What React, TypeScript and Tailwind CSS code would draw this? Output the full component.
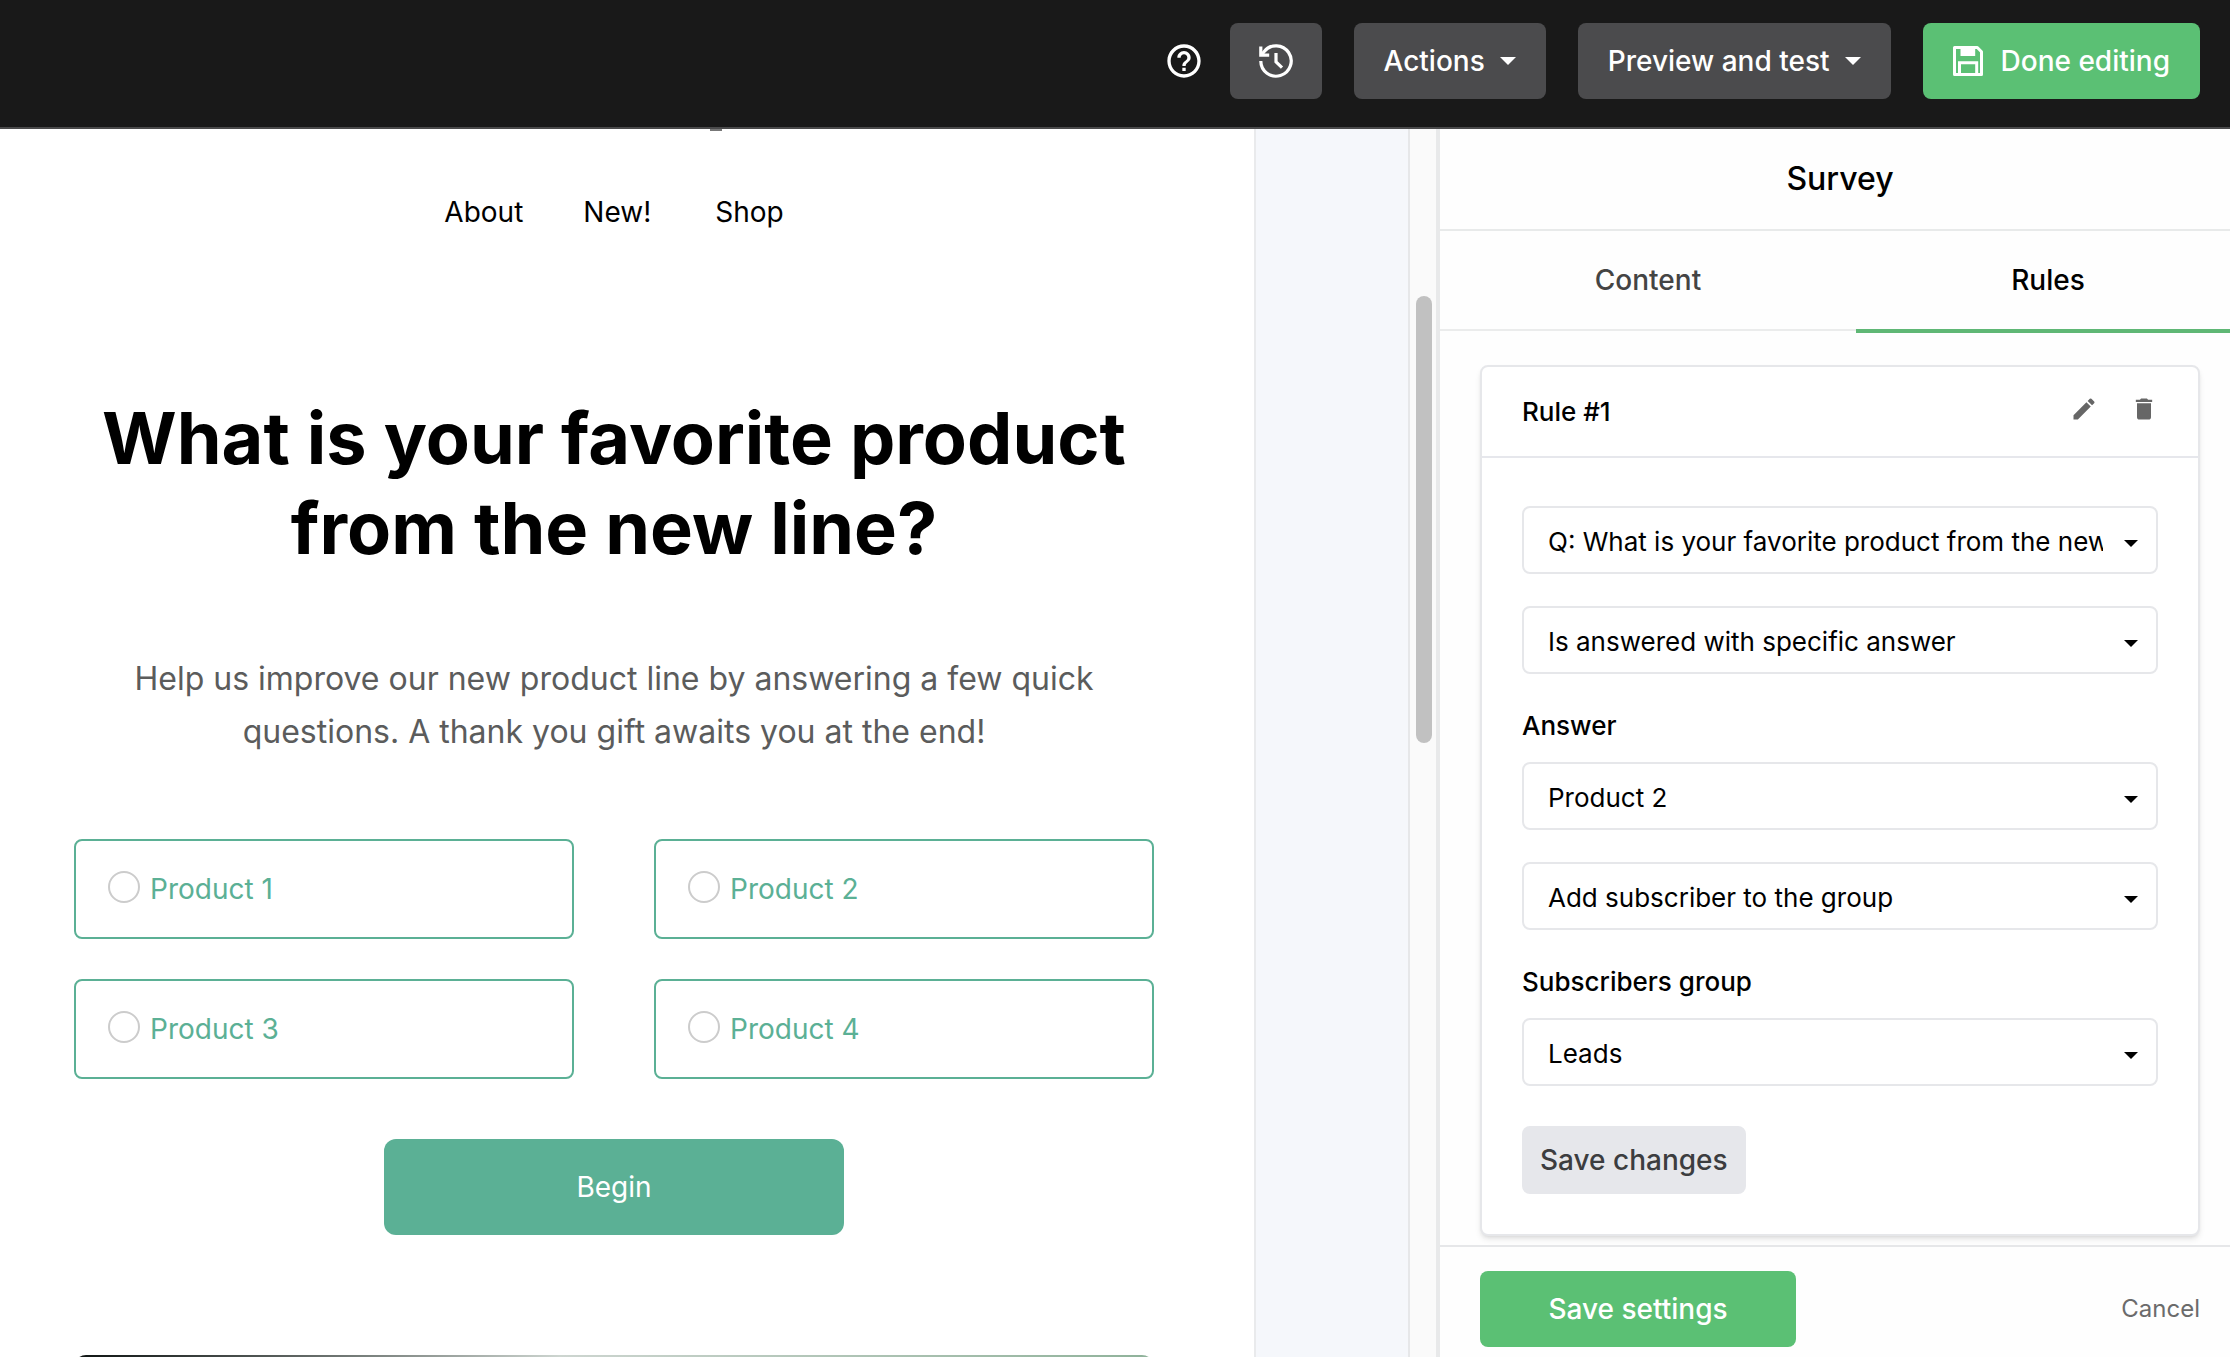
import { useState } from "react";
import { MdDelete, MdEdit, MdHelpOutline } from "react-icons/md";

const products = ["Product 1", "Product 2", "Product 3", "Product 4"];

const Caret = ({ className }: { className?: string }) => (
  <svg className={className} viewBox="0 0 16 8" fill="currentColor" aria-hidden="true">
    <path d="M0 0h16L8 8z" />
  </svg>
);

const HistoryIcon = () => (
  <svg className="w-[34px] h-[34px]" viewBox="0 0 34 34" fill="none" stroke="currentColor" strokeWidth="3.2" aria-hidden="true">
    <path d="M1.8 17a15.2 15.2 0 1 0 3.4-9.6L2.4 11" />
    <path d="M1.8 2.5v8.7h8.4" />
    <path d="M17 9v8.8l6 5.8" />
  </svg>
);

const SaveIcon = () => (
  <svg className="w-[30px] h-[30px]" viewBox="0 0 30 30" fill="none" stroke="currentColor" strokeWidth="3" aria-hidden="true">
    <path d="M1.5 1.5h22.8l4.2 4.3v22.7h-27z" strokeLinejoin="round" />
    <path d="M6.5 28V16.7h17.2V28" />
    <path d="M7.5 0h14.7v10H7.5z" fill="currentColor" stroke="none" />
  </svg>
);

const TopBar = () => {
  return (
    <header className="flex items-center justify-end gap-8 pt-[23px] pb-7 pr-[30px] bg-[#191919] border-b-2 border-[#4a4a4b] text-[28px] leading-9 font-medium text-white">
      <div className="flex items-center gap-[26px]">
        <button type="button" aria-label="Help">
          <MdHelpOutline className="w-10 h-10" />
        </button>
        <button type="button" aria-label="History" className="flex items-center justify-center w-[92px] h-[76px] bg-[#4b4b4d] rounded-lg">
          <HistoryIcon />
        </button>
      </div>
      <button type="button" className="flex items-center gap-[15px] h-[76px] px-[30px] bg-[#4b4b4d] rounded-lg">
        Actions
        <Caret className="w-4 h-2" />
      </button>
      <button type="button" className="flex items-center gap-[15px] h-[76px] px-[30px] bg-[#4b4b4d] rounded-lg">
        Preview and test
        <Caret className="w-4 h-2" />
      </button>
      <button type="button" className="flex items-center gap-[18px] h-[76px] px-[30px] bg-[#5bc074] rounded-lg">
        <SaveIcon />
        Done editing
      </button>
    </header>
  );
};

const EmailPreview = () => {
  return (
    <main className="flex flex-col flex-1 min-w-0 pl-[74px] pr-[100px] bg-white border-r-2 border-[#e9eaec]">
      {/* tail of the logo that is scrolled out of view */}
      <div className="shrink-0 self-center w-3 h-0.5 ml-[204px] bg-[#777777]" />
      <nav className="flex justify-center gap-[60px] mt-[61px] text-[28px] leading-10 text-black">
        <a href="#about">About</a>
        <a href="#new" className="pr-1">New!</a>
        <a href="#shop">Shop</a>
      </nav>
      <h1 className="mt-[161px] text-center text-[72px] leading-[90px] font-bold text-black">
        What is your favorite product
        <br />
        from the new line?
      </h1>
      <p className="mt-[79px] text-center text-[32px] leading-[53px] text-[#5b5c5c]">
        Help us improve our new product line by answering a few quick
        <br />
        questions. A thank you gift awaits you at the end!
      </p>
      <div className="grid grid-cols-2 gap-x-20 gap-y-10 mt-[81px]">
        {products.map((product) => (
          <label key={product} className="flex items-center gap-2.5 h-[100px] px-8 border-2 border-[#5bb095] rounded-lg text-[28px] leading-10 text-[#5bb095]">
            <input type="radio" name="product" className="appearance-none w-8 h-8 mb-1 border-2 border-[#cccccc] rounded-full bg-white checked:border-[#5bb095]" />
            {product}
          </label>
        ))}
      </div>
      <button type="button" className="shrink-0 self-center w-[460px] h-24 mt-[60px] bg-[#5bb095] rounded-xl text-[28px] leading-10 text-white">
        Begin
      </button>
      <div className="shrink-0 h-80 mt-[120px] rounded-xl bg-linear-to-r from-[#0f1413] via-[#cdd5d0] via-45% to-[#8fb29a]" />
    </main>
  );
};

type SelectFieldProps = {
  id: string;
  label: string;
  value: string;
  showLabel?: boolean;
};

const SelectField = ({ id, label, value, showLabel }: SelectFieldProps) => {
  return (
    <div>
      {showLabel && (
        <label htmlFor={id} className="block pt-0.5 pb-[18px] text-[26px] leading-9 font-medium text-black">
          {label}
        </label>
      )}
      <div className="relative">
        <select
          id={id}
          aria-label={showLabel ? undefined : label}
          className="block appearance-none w-full h-[68px] pl-6 pr-[53px] pt-1 bg-white border-2 border-[#e6e7ea] rounded-lg text-[26px] leading-9 text-black"
        >
          <option>{value}</option>
        </select>
        <Caret className="absolute right-5 top-[34px] w-3.5 h-[7px] text-black pointer-events-none" />
      </div>
    </div>
  );
};

const RuleCard = () => {
  return (
    <section className="border-2 border-[#e6e7ea] rounded-lg bg-white shadow-md">
      <div className="flex items-center justify-between h-[91px] px-10 border-b-2 border-[#e6e7ec]">
        <h3 className="text-[26px] leading-9 font-medium text-black">Rule #1</h3>
        <div className="flex gap-8 pb-1.5 text-[#666666]">
          <button type="button" aria-label="Edit rule">
            <MdEdit className="w-7 h-7" />
          </button>
          <button type="button" aria-label="Delete rule">
            <MdDelete className="w-7 h-7" />
          </button>
        </div>
      </div>
      <form className="flex flex-col gap-8 px-10 pt-12 pb-10">
        <SelectField id="question" label="Question" value="Q: What is your favorite product from the new line?" />
        <SelectField id="condition" label="Condition" value="Is answered with specific answer" />
        <SelectField id="answer" label="Answer" value="Product 2" showLabel />
        <SelectField id="action" label="Action" value="Add subscriber to the group" />
        <SelectField id="group" label="Subscribers group" value="Leads" showLabel />
        <button type="button" className="self-start h-[68px] mt-2 px-[18px] bg-[#e6e7eb] rounded-lg text-[28px] leading-9 font-medium text-[#3c3d3f]">
          Save changes
        </button>
      </form>
    </section>
  );
};

const SettingsPanel = () => {
  const [tab, setTab] = useState("Rules");

  return (
    <aside className="flex flex-col shrink-0 w-[794px] border-l-4 border-[#e8e9ea] bg-[#fefefe]">
      <h2 className="shrink-0 h-[102px] pl-2.5 pt-[30px] border-b-2 border-[#e8eaea] text-center text-[32px] leading-10 font-medium text-black">Survey</h2>
      <div role="tablist" className="flex shrink-0 h-[100px] border-b-2 border-[#ebecec] text-[28px] leading-9 font-medium">
        <button
          type="button"
          role="tab"
          aria-selected={tab === "Content"}
          onClick={() => setTab("Content")}
          className={tab === "Content" ? "w-[416px] h-[102px] border-b-4 border-[#5fb775] text-black" : "w-[416px] h-[98px] text-[#444444]"}
        >
          Content
        </button>
        <button
          type="button"
          role="tab"
          aria-selected={tab === "Rules"}
          onClick={() => setTab("Rules")}
          className={tab === "Rules" ? "flex-1 h-[102px] pl-2.5 border-b-4 border-[#5fb775] text-black" : "flex-1 h-[98px] pl-2.5 text-[#444444]"}
        >
          Rules
        </button>
      </div>
      <div className="flex-1 min-h-0 overflow-hidden pl-10 pr-[30px] pt-[34px]">
        <RuleCard />
      </div>
      <footer className="flex shrink-0 items-center justify-between pl-10 pr-[30px] pt-6 pb-2.5 border-t-2 border-[#e6e7e9]">
        <button type="button" className="w-[316px] h-[76px] bg-[#5bc074] rounded-lg text-[28px] leading-9 font-medium text-white">
          Save settings
        </button>
        <button type="button" className="text-2xl text-[#6b6b6b]">Cancel</button>
      </footer>
    </aside>
  );
};

export default function App() {
  return (
    <div className="flex flex-col h-screen overflow-hidden font-['Inter',sans-serif]">
      <TopBar />
      <div className="flex flex-1 min-h-0">
        <div className="flex flex-1 min-w-0 overflow-hidden bg-[#f5f7fb]">
          <EmailPreview />
          <div className="w-[152px]" />
        </div>
        <div className="w-7 pl-1.5 pt-[167px] border-l-2 border-[#e6e7e9] bg-[#fafafa]">
          <div className="w-4 h-[447px] rounded-full bg-[#c1c1c1]" />
        </div>
        <SettingsPanel />
      </div>
    </div>
  );
}
